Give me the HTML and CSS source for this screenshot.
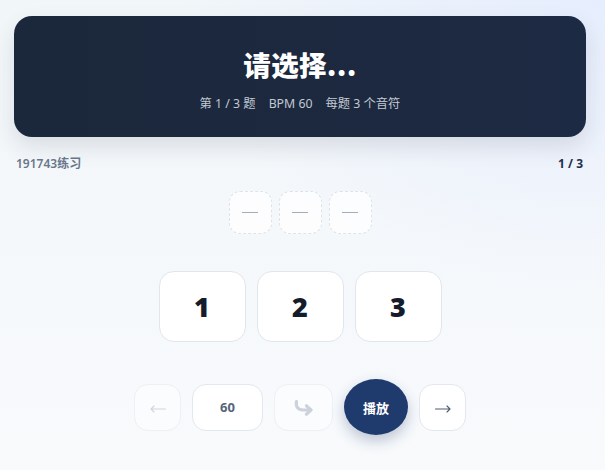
FILE: index.html
```html
<!DOCTYPE html>
<html lang="zh">
<head>
<meta charset="utf-8">
<title>练习</title>
<link rel="stylesheet" href="styles.css">
</head>
<body>
<div class="page">
  <header class="hero">
    <h1 class="hero-title">请选择...</h1>
    <div class="hero-sub">
      <span>第 1 / 3 题</span>
      <span>BPM 60</span>
      <span>每题 3 个音符</span>
    </div>
  </header>

  <div class="meta">
    <span class="meta-name">191743练习</span>
    <span class="meta-count">1 / 3</span>
  </div>

  <div class="slots">
    <div class="slot"><span class="dash"></span></div>
    <div class="slot"><span class="dash"></span></div>
    <div class="slot"><span class="dash"></span></div>
  </div>

  <div class="choices">
    <button class="choice">1</button>
    <button class="choice">2</button>
    <button class="choice">3</button>
  </div>

  <div class="controls">
    <button class="ctl ctl-sq ctl-off" aria-label="上一题">
      <svg class="arrow" width="16" height="8" viewBox="0 0 16 8" aria-hidden="true">
        <path d="M15.5 4 H1 M4 1 L1 4 L4 7" fill="none" stroke="#cfd6df" stroke-width="1.1" stroke-linecap="round" stroke-linejoin="round"/>
      </svg>
    </button>
    <button class="ctl ctl-bpm">60</button>
    <button class="ctl ctl-redo ctl-off" aria-label="重播">
      <svg width="22" height="18" viewBox="0 0 22 18" aria-hidden="true">
        <path d="M3.5 3.5 C2.5 8.5 5 12 10 12 L17 12" fill="none" stroke="#cbd2dc" stroke-width="3.2" stroke-linecap="round"/>
        <path d="M13.5 7.8 L18 12 L13.5 16.2" fill="none" stroke="#cbd2dc" stroke-width="3.2" stroke-linecap="round" stroke-linejoin="round"/>
      </svg>
    </button>
    <button class="ctl-play">播放</button>
    <button class="ctl ctl-sq" aria-label="下一题">
      <svg class="arrow" width="16" height="8" viewBox="0 0 16 8" aria-hidden="true">
        <path d="M0.5 4 H15 M12 1 L15 4 L12 7" fill="none" stroke="#4f5d70" stroke-width="1.1" stroke-linecap="round" stroke-linejoin="round"/>
      </svg>
    </button>
  </div>
</div>
</body>
</html>
```

FILE: styles.css
```css
* { box-sizing: border-box; }

html, body {
  margin: 0;
  height: 100%;
}

body {
  font-family: "Noto Sans", "Noto Sans CJK SC", sans-serif;
  background:
    radial-gradient(ellipse 420px 300px at 100% 0%, #e6edfd 0%, rgba(230,237,253,0) 100%),
    linear-gradient(180deg, #f1f6f9 0%, #f5f8fb 50%, #f8fafc 100%);
  overflow: hidden;
}

.page {
  width: 572px;
  margin-left: 14px;
  padding-top: 16px;
}

.hero {
  height: 121px;
  border-radius: 18px;
  background: linear-gradient(90deg, #1b273a 0%, #1d2a43 100%);
  box-shadow: 0 10px 22px rgba(30, 41, 59, 0.12);
  display: flex;
  flex-direction: column;
  align-items: center;
  padding-top: 28px;
}

.hero-title {
  margin: 0;
  color: #ffffff;
  font-family: "Noto Sans CJK SC", sans-serif;
  font-size: 27.5px;
  font-weight: 800;
  line-height: 40px;
  letter-spacing: 0.3px;
}

.hero-sub {
  margin-top: 11px;
  display: flex;
  gap: 13px;
  color: #c2c9d4;
  font-family: "Noto Sans", "Noto Sans CJK SC", sans-serif;
  font-size: 12.3px;
  line-height: 17px;
}

.meta {
  margin-top: 19px;
  padding: 0 2px;
  display: flex;
  justify-content: space-between;
  font-size: 12px;
  line-height: 16px;
  font-weight: 600;
}

.meta-name { color: #68768a; }
.meta-count { color: #1f2f4d; font-weight: 700; margin-right: 1px; }

.slots {
  margin-top: 19px;
  display: flex;
  justify-content: center;
  gap: 7px;
}

.slot {
  width: 43px;
  height: 43px;
  border: 1px dashed #dde3ea;
  border-radius: 11px;
  background: rgba(255, 255, 255, 0.75);
  display: flex;
  align-items: center;
  justify-content: center;
}

.dash {
  width: 16px;
  height: 1.5px;
  background: #a3acb8;
}

.choices {
  margin-top: 37px;
  display: flex;
  justify-content: center;
  gap: 11px;
}

.choice {
  width: 87px;
  height: 71px;
  border: 1px solid #e1e6ed;
  border-radius: 15px;
  background: #ffffff;
  color: #141c2b;
  font-family: "Open Sans", "Noto Sans", sans-serif;
  font-size: 27px;
  font-weight: 800;
  padding: 0;
}

.controls {
  margin-top: 37px;
  display: flex;
  justify-content: center;
  align-items: center;
  gap: 11px;
}

.ctl {
  height: 47px;
  border: 1px solid #e3e8ee;
  border-radius: 14px;
  background: #ffffff;
  display: flex;
  align-items: center;
  justify-content: center;
  padding: 0;
}

.ctl-sq { width: 47px; }

.ctl-off {
  background: rgba(255, 255, 255, 0.45);
  border-color: #edf0f4;
}

.ctl-bpm {
  width: 71px;
  color: #556478;
  font-family: "Noto Sans", sans-serif;
  font-size: 13px;
  font-weight: 700;
}

.ctl-redo { width: 59px; }

.arrow { margin-top: 3px; }

.ctl-play {
  width: 64px;
  height: 56px;
  border: none;
  border-radius: 50%;
  background: #1f3a6d;
  color: #ffffff;
  font-family: "Noto Sans CJK SC", sans-serif;
  font-size: 13px;
  font-weight: 700;
  box-shadow: 0 6px 14px rgba(31, 58, 109, 0.28);
  padding: 0;
}
```
